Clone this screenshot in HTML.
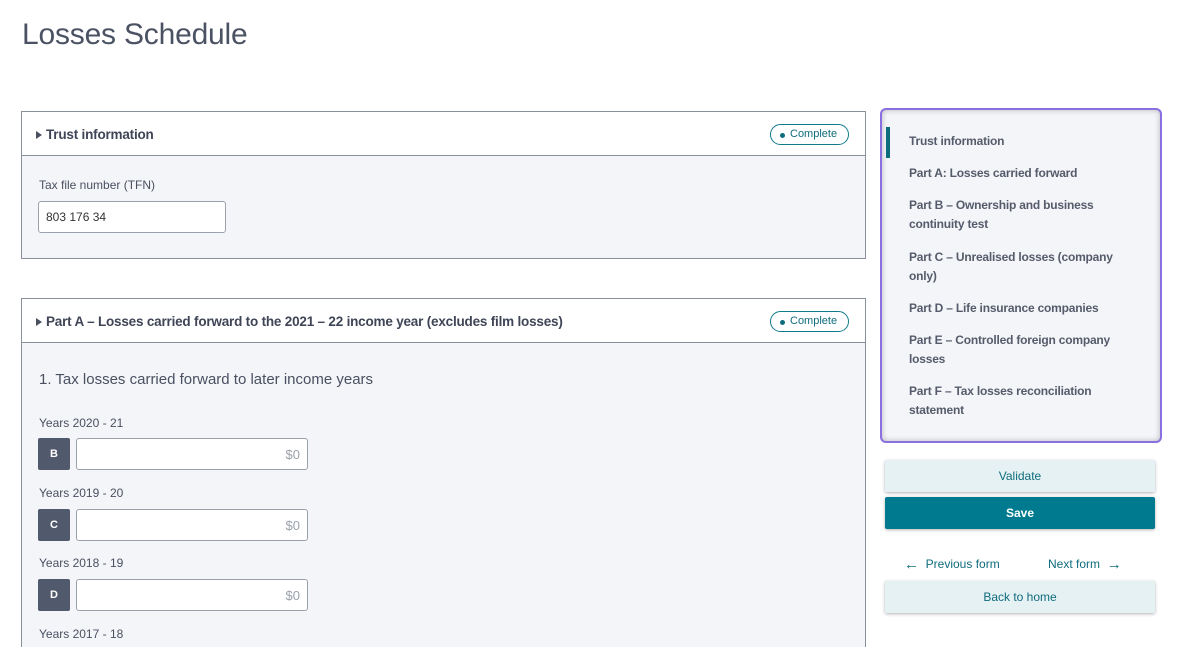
<!DOCTYPE html>
<html><head><style>
*{box-sizing:border-box;margin:0;padding:0}
html,body{width:1188px;height:647px;overflow:hidden}
body{background:#fff;font-family:"Liberation Sans",sans-serif;color:#4a5060;position:relative}
h1{position:absolute;left:22px;top:18px;font-size:30px;font-weight:400;color:#4a5263;letter-spacing:-0.2px}
.card{position:absolute;left:21px;width:845px;border:1px solid #8a8f9c;background:#f4f5f9}
.hd{height:44px;background:#fff;border-bottom:1px solid #8a8f9c;position:relative;font-size:13.5px;font-weight:bold;color:#3f4556;padding:15px 0 0 24px;letter-spacing:-0.2px}
.hd:before{content:"";position:absolute;left:14px;top:19px;border-left:6px solid #4a5060;border-top:4px solid transparent;border-bottom:4px solid transparent}
.badge{position:absolute;right:16px;top:12px;width:79px;height:21px;border:1px solid #0f7a8a;border-radius:11px;font-size:11px;font-weight:400;color:#0f6c7c;padding:3px 0 0 19px;letter-spacing:0}
.badge:before{content:"";position:absolute;left:9px;top:8px;width:5px;height:5px;border-radius:50%;background:#0f6c7c}
.lbl{position:absolute;left:17px;font-size:12px;color:#4a5060}
.inp{position:absolute;background:#fff;border:1px solid #9aa0ac;border-radius:3px;font-size:12px}
.key{position:absolute;left:16px;width:32px;height:32px;background:#515a6c;border-radius:2px;color:#fff;font-size:11px;font-weight:bold;text-align:center;line-height:32px}
.v{text-align:right;padding:8px 7px 0 0;color:#9aa0aa;font-size:13px}
.nav{position:absolute;left:880px;top:108px;width:282px;height:335px;border:2px solid #8a6fe0;border-radius:6px;background:#f4f5f9;box-shadow:inset 0 0 6px rgba(0,0,0,.25)}
.nav div{position:absolute;left:27px;font-size:12px;font-weight:bold;color:#555b6a;line-height:19px;width:215px;letter-spacing:-0.2px}
.btn{position:absolute;left:885px;width:270px;height:32px;background:#e6f1f3;color:#0f6c7c;font-size:12px;text-align:center;line-height:32px;box-shadow:0 1px 3px rgba(0,0,0,.3);border-radius:2px}
.ar{font-size:15px;vertical-align:-1px}
</style></head><body>
<h1>Losses Schedule</h1>
<div class="card" style="top:111px;height:148px">
<div class="hd">Trust information<span class="badge">Complete</span></div>
<div class="lbl" style="top:66px">Tax file number (TFN)</div>
<div class="inp" style="left:16px;top:89px;width:188px;height:32px;padding:8px 0 0 7px;color:#333">803 176 34</div>
</div>
<div class="card" style="top:298px;height:380px">
<div class="hd">Part A – Losses carried forward to the 2021 – 22 income year (excludes film losses)<span class="badge">Complete</span></div>
<div class="lbl" style="top:72px;font-size:15px">1. Tax losses carried forward to later income years</div>
<div class="lbl" style="top:117px">Years 2020 - 21</div>
<div class="key" style="top:139px">B</div><div class="inp v" style="left:54px;top:139px;width:232px;height:32px">$0</div>
<div class="lbl" style="top:187px">Years 2019 - 20</div>
<div class="key" style="top:210px">C</div><div class="inp v" style="left:54px;top:210px;width:232px;height:32px">$0</div>
<div class="lbl" style="top:257px">Years 2018 - 19</div>
<div class="key" style="top:280px">D</div><div class="inp v" style="left:54px;top:280px;width:232px;height:32px">$0</div>
<div class="lbl" style="top:328px">Years 2017 - 18</div>
</div>
<div class="nav">
<span style="position:absolute;left:4px;top:17px;width:4px;height:31px;background:#0f6c7c"></span>
<div style="top:22px">Trust information</div>
<div style="top:54px">Part A: Losses carried forward</div>
<div style="top:86px">Part B – Ownership and business continuity test</div>
<div style="top:138px">Part C – Unrealised losses (company only)</div>
<div style="top:189px">Part D – Life insurance companies</div>
<div style="top:221px">Part E – Controlled foreign company losses</div>
<div style="top:272px">Part F – Tax losses reconciliation statement</div>
</div>
<div class="btn" style="top:460px">Validate</div>
<div class="btn" style="top:497px;background:#007a8e;color:#fff;font-weight:bold">Save</div>
<div style="position:absolute;left:904px;top:556px;font-size:12px;color:#0f6c7c"><span class="ar">←</span>&nbsp; Previous form</div>
<div style="position:absolute;left:1048px;top:556px;font-size:12px;color:#0f6c7c">Next form &nbsp;<span class="ar">→</span></div>
<div class="btn" style="top:581px">Back to home</div>
</body></html>
